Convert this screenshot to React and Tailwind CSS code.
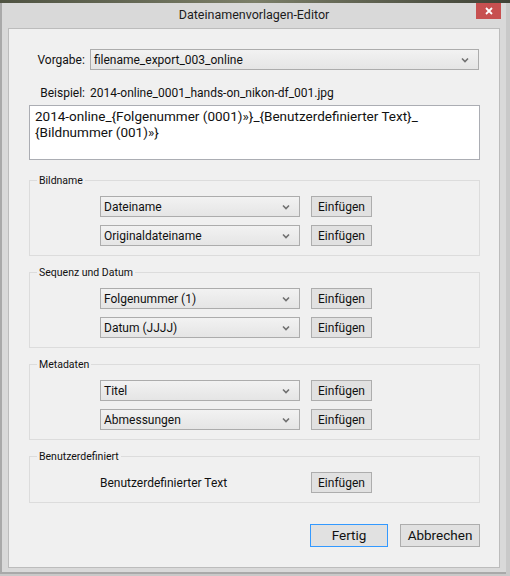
import React from 'react';

const font = { fontFamily: 'Roboto, "Noto Sans", Arial, sans-serif' };

function Chevron() {
    return (
        <svg width="8" height="6" viewBox="0 0 8 6" className="shrink-0">
            <path d="M1 1.5 L4 4.5 L7 1.5" fill="none" stroke="#707070" strokeWidth="1.6" />
        </svg>
    );
}

function Select({ value, className }) {
    return (
        <div className={"flex items-center justify-between h-[21px] border border-[#acacac] bg-gradient-to-b from-[#f2f2f2] to-[#e5e5e5] pl-[3px] pr-[9px] text-[12px] text-[#111] " + className}>
            <span className="leading-none">{value}</span>
            <Chevron />
        </div>
    );
}

function InsertButton() {
    return (
        <button className="h-[21px] w-[61px] border border-[#adadad] bg-[#e1e1e1] text-[12px] text-[#111] leading-none">
            Einfügen
        </button>
    );
}

function Group({ title, children }) {
    return (
        <div className="relative border border-[#dcdcdc] pt-[15px] pb-[9px] pl-[70px] flex flex-col gap-[8px]">
            <span className="absolute left-[7px] top-[-7px] bg-[#f0f0f0] px-[2px] text-[10.5px] leading-[13px] text-[#111]">
                {title}
            </span>
            {children}
        </div>
    );
}

function SelectRow({ value }) {
    return (
        <div className="flex items-center gap-[11px]">
            <Select value={value} className="w-[200px]" />
            <InsertButton />
        </div>
    );
}

export default function App() {
    return (
        <div className="w-[510px] h-[576px] bg-[#c9c9c9] overflow-hidden" style={font}>
            {/* strip of desktop photo above the window */}
            <div className="h-[3px] bg-gradient-to-r from-[#4f5342] via-[#7b7e68] to-[#3f4236]" />

            <div className="w-[506px] h-[571px] bg-[#d9d9d9] border-l-2 border-b-2 border-[#a9a9a9] flex flex-col">
                {/* Title bar */}
                <div className="relative h-[25px] flex items-center justify-center">
                    <span className="text-[12.5px] text-[#1c1c1c]">Dateinamenvorlagen-Editor</span>
                    <div className="absolute right-[5px] top-0 w-[25px] h-[16px] bg-[#c75050] flex items-center justify-center">
                        <svg width="8" height="8" viewBox="0 0 8 8">
                            <path d="M1 1 L7 7 M7 1 L1 7" stroke="#fff" strokeWidth="1.8" />
                        </svg>
                    </div>
                </div>

                {/* Client area */}
                <div className="ml-[6px] w-[492px] h-[540px] bg-[#f0f0f0] border border-[#bcbcbc] px-[20px] text-[#111]">
                    <div className="flex items-center mt-[20px] gap-[5px]">
                        <span className="w-[56px] text-right text-[12px]">Vorgabe:</span>
                        <Select value="filename_export_003_online" className="w-[390px]" />
                    </div>

                    <div className="flex items-center h-[14px] mt-[16px] gap-[5px] text-[12px]">
                        <span className="w-[56px] text-right">Beispiel:</span>
                        <span>2014-online_0001_hands-on_nikon-df_001.jpg</span>
                    </div>

                    <div className="mt-[5px] h-[55px] w-[451px] border border-[#abadb3] bg-white px-[5px] pt-[2px] text-[13.5px] leading-[16px] text-[#111]">
                        2014-online_{'{'}Folgenummer (0001)»{'}'}_{'{'}Benutzerdefinierter Text{'}'}_
                        <br />
                        {'{'}Bildnummer (001)»{'}'}
                    </div>

                    <div className="mt-[20px] w-[451px] flex flex-col gap-[16px]">
                        <Group title="Bildname">
                            <SelectRow value="Dateiname" />
                            <SelectRow value="Originaldateiname" />
                        </Group>
                        <Group title="Sequenz und Datum">
                            <SelectRow value="Folgenummer (1)" />
                            <SelectRow value="Datum (JJJJ)" />
                        </Group>
                        <Group title="Metadaten">
                            <SelectRow value="Titel" />
                            <SelectRow value="Abmessungen" />
                        </Group>
                        <Group title="Benutzerdefiniert">
                            <div className="flex items-center gap-[11px]">
                                <span className="w-[200px] text-[12px]">Benutzerdefinierter Text</span>
                                <InsertButton />
                            </div>
                        </Group>
                    </div>

                    <div className="mt-[21px] w-[451px] flex justify-end gap-[12px]">
                        <button className="h-[23px] w-[78px] border border-[#3399ff] bg-[#e1e1e1] text-[13.5px] leading-none">
                            Fertig
                        </button>
                        <button className="h-[23px] w-[80px] border border-[#adadad] bg-[#e1e1e1] text-[13.5px] leading-none">
                            Abbrechen
                        </button>
                    </div>
                </div>
            </div>
        </div>
    );
}
